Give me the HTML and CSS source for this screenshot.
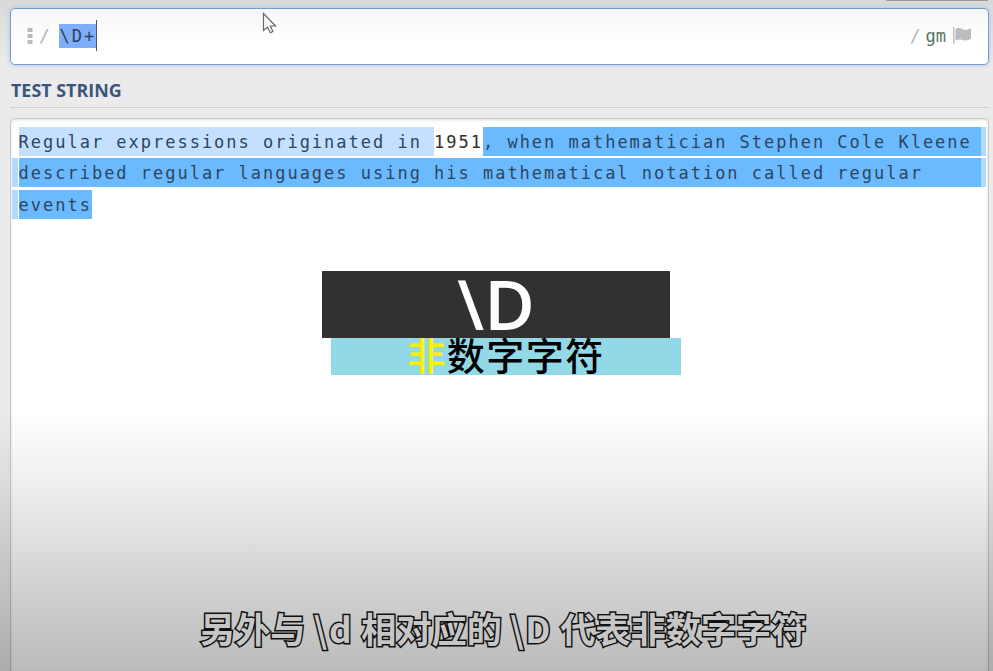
FILE: index.html
```
<!DOCTYPE html>
<html lang="zh">
<head>
<meta charset="utf-8">
<title>Regex tester</title>
<link rel="stylesheet" href="styles.css">
</head>
<body>
<main class="page">
  <div class="top-strip"></div>
  <div class="regex-bar">
    <svg class="grip" width="6" height="18" viewBox="0 0 6 18"><path d="M.5 1h5v4h-5zM.5 7h5v4h-5zM.5 13h5v4h-5z" fill="#bababa"/></svg>
    <span class="delimiter">/</span>
    <span class="pattern">\D+</span>
    <span class="caret"></span>
    <span class="delimiter closing">/</span>
    <span class="flags">gm</span>
    <svg class="flag" width="20" height="18" viewBox="0 0 20 18"><path d="M1 0h1.4v17H1z" fill="#bcbcbc"/><path d="M3.400 2.200c4-2.600 6.600.2 8.600.6 2.500.5 4.600-.5 7-1.600v10.600c-2.800 1.600-5 2-7.400 1.400-2.600-.8-4.800-1.200-8.200.4z" fill="#bcbcbc"/></svg>
  </div>
  <h2 class="heading">TEST STRING</h2>
  <section class="editor">
    <div class="line first"><span class="match light">Regular expressions originated in </span><span class="plain">1951</span><span class="match fill">, when mathematician Stephen Cole Kleene</span></div>
    <div class="line wrapped"><span class="match fill">described regular languages using his mathematical notation called regular</span></div>
    <div class="line last"><span class="match">events</span></div>
  </section>
</main>
<div class="shade"></div>
<div class="card">
  <div class="card-title">\D</div>
  <div class="card-text"><span class="accent">非</span>数字字符</div>
</div>
<div class="subtitle">另外与 <span class="latin">\d</span> 相对应的 <span class="latin">\D</span> 代表非数字字符</div>
<svg class="pointer" width="16" height="23" viewBox="0 0 16 23"><path d="M1.500 1.500v17l3.900-3.400 3 5.600 2.500-1.200-2.600-5.500h5.200z" fill="#fafafa" stroke="#686868" stroke-width="1.200"/></svg>
</body>
</html>
```
FILE: styles.css
```
* { box-sizing: border-box; }
body {
  margin: 0;
  height: 671px;
  overflow: hidden;
  position: relative;
  background: #ebebeb;
  font-family: "Open Sans", "Noto Sans CJK SC", sans-serif;
}
.page {
  height: 671px;
  padding: 0 4px 0 10px;
  display: flex;
  flex-direction: column;
  background: linear-gradient(#d9d9d9, #ebebeb 60px);
}
.top-strip {
  width: 102px;
  height: 1px;
  margin: 0 1px 7px auto;
  background: #999;
  flex: none;
}
.regex-bar {
  height: 57px;
  flex: none;
  display: flex;
  align-items: center;
  padding: 0 16px 2px;
  border: 1.500px solid #799dcb;
  border-radius: 5px;
  background: linear-gradient(#f6f6f6, #fff 60%);
  box-shadow: 0 0 5px #a9c3e8;
  font: 17px "DejaVu Sans Mono", monospace;
}
.grip { margin-right: 6px; }
.delimiter { color: #b5b5b5; font-size: 18px; }
.pattern {
  width: 37px;
  height: 24px;
  margin-left: 9.600px;
  line-height: 25px;
  letter-spacing: 2px;
  white-space: nowrap;
  background: #7faefa;
  color: #2b4262;
}
.caret { width: 1px; height: 31px; background: #555; }
.closing { margin-left: auto; }
.flags { margin: 0 6px 0 5px; color: #567460; }
.heading {
  height: 43px;
  flex: none;
  margin: 0;
  padding: 15px 0 0 1px;
  border-bottom: 1px solid #cfcfcf;
  font-size: 17.900px;
  line-height: 20px;
  font-weight: 700;
  color: #3b557d;
}
.editor {
  flex: 1;
  margin-top: 10px;
  padding: 8px 2px 0 1px;
  border: 1px solid #c9c9c9;
  border-bottom: 0;
  border-radius: 5px 5px 0 0;
  background: #fff;
  box-shadow: inset 0 1px 3px #ddd;
  color: #2c465f;
  font: 17px/30px "DejaVu Sans Mono", monospace;
  letter-spacing: 1.985px;
}
.line {
  display: flex;
  height: 29px;
  margin-bottom: 2.400px;
  padding-left: 6.600px;
  white-space: pre;
}
.match { background: #6bbaff; }
.light { background: #c5e0ff; }
.plain { color: #303030; }
.fill { flex: 1; }
.first, .wrapped { border-right: 5px solid #b1daff; }
.wrapped, .last {
  padding-left: 0.600px;
  border-left: 6px solid #b1daff;
}
.shade {
  position: absolute;
  inset: 410px 0 0;
  background: linear-gradient(transparent, rgba(0,0,0,.06) 25%, rgba(0,0,0,.265));
}
.card {
  position: absolute;
  left: 322px;
  top: 271px;
  width: 360px;
}
.card-title {
  width: 348px;
  height: 67px;
  background: #313131;
  color: #fff;
  text-align: center;
  font: 600 69px/64px "Open Sans", sans-serif;
}
.card-text {
  width: 350px;
  height: 37px;
  margin-left: 9px;
  background: #92d8e7;
  color: #000;
  text-align: center;
  font: 500 38px/32px "Noto Sans CJK SC", sans-serif;
  letter-spacing: 1.500px;
}
.accent { color: #fff000; }
.subtitle {
  position: absolute;
  left: 200px;
  top: 603px;
  width: 620px;
  white-space: nowrap;
  color: #c6c6c6;
  font: 700 35.200px/50px "Noto Sans CJK SC", sans-serif;
  -webkit-text-stroke: 3px #111;
  paint-order: stroke fill;
}
.latin { letter-spacing: 1.700px; }
.pointer {
  position: absolute;
  left: 262px;
  top: 12px;
}
```
